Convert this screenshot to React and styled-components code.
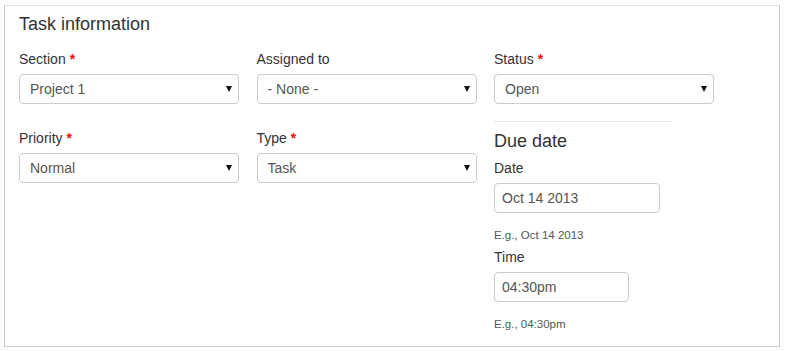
import React from "react";
import styled, { createGlobalStyle } from "styled-components";

const Global = createGlobalStyle`
  html, body { margin: 0; padding: 0; background: #fff; }
  body { font-family: "Liberation Sans", Arial, sans-serif; color: #333; }
  * { box-sizing: border-box; }
`;

const Panel = styled.section`
  margin: 5px 0 0 4px;
  width: 776px;
  height: 342px;
  border: 1px solid #c8c8c8;
  border-top-color: #e2e2e2;
  padding: 6px 14px 14px 14px;
`;

const Title = styled.h2`
  margin: 0;
  font-size: 18px;
  line-height: 24px;
  font-weight: normal;
  color: #333;
`;

const Columns = styled.div`
  display: flex;
  gap: 17.5px;
  margin-top: 13px;
`;

const Column = styled.div`
  display: flex;
  flex-direction: column;
  width: 220px;
`;

const Field = styled.div`
  display: flex;
  flex-direction: column;
  margin-top: ${(p) => p.$mt || 0}px;
`;

const Label = styled.label`
  display: block;
  height: 20px;
  font-size: 14px;
  line-height: 20px;
  color: #333;
  margin-bottom: 5px;
  white-space: nowrap;
`;

const Req = styled.span`
  color: #ee1111;
  font-size: 14px;
  font-weight: bold;
  line-height: 1;
  margin-left: 4px;
`;

const Select = styled.div`
  display: flex;
  align-items: center;
  justify-content: space-between;
  height: 30px;
  width: 220px;
  border: 1px solid #cccccc;
  border-radius: 4px;
  padding: 0 6px 0 10px;
  font-size: 14px;
  color: #555;
  background: #fff;
`;

const Arrow = styled.span`
  width: 0;
  height: 0;
  border-left: 3px solid transparent;
  border-right: 3px solid transparent;
  border-top: 6px solid #111;
`;

const Rule = styled.hr`
  margin: 17px 0 0 0;
  width: 178px;
  height: 0;
  border: 0;
  border-top: 1px solid #e6e6e6;
`;

const SubTitle = styled.h3`
  margin: 8px 0 0 0;
  font-size: 18px;
  line-height: 22px;
  font-weight: normal;
  color: #333;
`;

const Input = styled.div`
  display: flex;
  align-items: center;
  height: 30px;
  width: ${(p) => p.$w}px;
  border: 1px solid #cccccc;
  border-radius: 4px;
  padding: 0 7px;
  font-size: 14px;
  color: #555;
`;

const Help = styled.div`
  margin-top: 14px;
  font-size: 11.5px;
  line-height: 16px;
  color: #555;
`;

const SelectField = ({ label, required, value, mt }) => (
  <Field $mt={mt}>
    <Label>
      {label}
      {required && <Req>*</Req>}
    </Label>
    <Select>
      <span>{value}</span>
      <Arrow />
    </Select>
  </Field>
);

export default function App() {
  return (
    <>
      <Global />
      <Panel>
        <Title>Task information</Title>
        <Columns>
          <Column>
            <SelectField label="Section" required value="Project 1" />
            <SelectField label="Priority" required value="Normal" mt={24} />
          </Column>
          <Column>
            <SelectField label="Assigned to" value="- None -" />
            <SelectField label="Type" required value="Task" mt={24} />
          </Column>
          <Column>
            <SelectField label="Status" required value="Open" />
            <Rule />
            <SubTitle>Due date</SubTitle>
            <Field $mt={6}>
              <Label>Date</Label>
              <Input $w={166}>Oct 14 2013</Input>
              <Help>E.g., Oct 14 2013</Help>
            </Field>
            <Field $mt={4}>
              <Label>Time</Label>
              <Input $w={135}>04:30pm</Input>
              <Help>E.g., 04:30pm</Help>
            </Field>
          </Column>
        </Columns>
      </Panel>
    </>
  );
}
